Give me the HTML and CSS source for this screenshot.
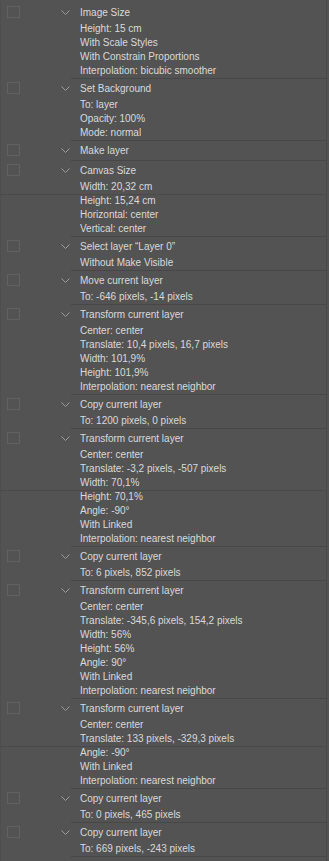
FILE: index.html
```html
<!DOCTYPE html>
<html>
<head>
<meta charset="utf-8">
<link rel="stylesheet" href="styles.css">
</head>
<body>
<div class="panel">
  <div class="item">
    <div class="ctrl"><span class="check"></span><svg class="chev" viewBox="0 0 9 5"><polyline points="0.5,0.5 4.5,4.5 8.5,0.5"/></svg></div>
    <div class="body">
      <div class="title">Image Size</div>
      <div class="line">Height: 15 cm</div>
      <div class="line">With Scale Styles</div>
      <div class="line">With Constrain Proportions</div>
      <div class="line">Interpolation: bicubic smoother</div>
    </div>
  </div>
  <div class="item">
    <div class="ctrl"><span class="check"></span><svg class="chev" viewBox="0 0 9 5"><polyline points="0.5,0.5 4.5,4.5 8.5,0.5"/></svg></div>
    <div class="body">
      <div class="title">Set Background</div>
      <div class="line">To: layer</div>
      <div class="line">Opacity: 100%</div>
      <div class="line">Mode: normal</div>
    </div>
  </div>
  <div class="item">
    <div class="ctrl"><span class="check"></span><svg class="chev" viewBox="0 0 9 5"><polyline points="0.5,0.5 4.5,4.5 8.5,0.5"/></svg></div>
    <div class="body">
      <div class="title">Make layer</div>
    </div>
  </div>
  <div class="item">
    <div class="ctrl"><span class="check"></span><svg class="chev" viewBox="0 0 9 5"><polyline points="0.5,0.5 4.5,4.5 8.5,0.5"/></svg></div>
    <div class="body">
      <div class="title">Canvas Size</div>
      <div class="line">Width: 20,32 cm</div>
      <div class="line cut">Height: 15,24 cm</div>
      <div class="line">Horizontal: center</div>
      <div class="line">Vertical: center</div>
    </div>
  </div>
  <div class="item">
    <div class="ctrl"><span class="check"></span><svg class="chev" viewBox="0 0 9 5"><polyline points="0.5,0.5 4.5,4.5 8.5,0.5"/></svg></div>
    <div class="body">
      <div class="title">Select layer “Layer 0”</div>
      <div class="line">Without Make Visible</div>
    </div>
  </div>
  <div class="item">
    <div class="ctrl"><span class="check"></span><svg class="chev" viewBox="0 0 9 5"><polyline points="0.5,0.5 4.5,4.5 8.5,0.5"/></svg></div>
    <div class="body">
      <div class="title">Move current layer</div>
      <div class="line">To: -646 pixels, -14 pixels</div>
    </div>
  </div>
  <div class="item">
    <div class="ctrl"><span class="check"></span><svg class="chev" viewBox="0 0 9 5"><polyline points="0.5,0.5 4.5,4.5 8.5,0.5"/></svg></div>
    <div class="body">
      <div class="title">Transform current layer</div>
      <div class="line">Center: center</div>
      <div class="line">Translate: 10,4 pixels, 16,7 pixels</div>
      <div class="line">Width: 101,9%</div>
      <div class="line">Height: 101,9%</div>
      <div class="line">Interpolation: nearest neighbor</div>
    </div>
  </div>
  <div class="item">
    <div class="ctrl"><span class="check"></span><svg class="chev" viewBox="0 0 9 5"><polyline points="0.5,0.5 4.5,4.5 8.5,0.5"/></svg></div>
    <div class="body">
      <div class="title">Copy current layer</div>
      <div class="line">To: 1200 pixels, 0 pixels</div>
    </div>
  </div>
  <div class="item">
    <div class="ctrl"><span class="check"></span><svg class="chev" viewBox="0 0 9 5"><polyline points="0.5,0.5 4.5,4.5 8.5,0.5"/></svg></div>
    <div class="body">
      <div class="title">Transform current layer</div>
      <div class="line">Center: center</div>
      <div class="line">Translate: -3,2 pixels, -507 pixels</div>
      <div class="line">Width: 70,1%</div>
      <div class="line cut">Height: 70,1%</div>
      <div class="line">Angle: -90°</div>
      <div class="line">With Linked</div>
      <div class="line">Interpolation: nearest neighbor</div>
    </div>
  </div>
  <div class="item">
    <div class="ctrl"><span class="check"></span><svg class="chev" viewBox="0 0 9 5"><polyline points="0.5,0.5 4.5,4.5 8.5,0.5"/></svg></div>
    <div class="body">
      <div class="title">Copy current layer</div>
      <div class="line">To: 6 pixels, 852 pixels</div>
    </div>
  </div>
  <div class="item">
    <div class="ctrl"><span class="check"></span><svg class="chev" viewBox="0 0 9 5"><polyline points="0.5,0.5 4.5,4.5 8.5,0.5"/></svg></div>
    <div class="body">
      <div class="title">Transform current layer</div>
      <div class="line">Center: center</div>
      <div class="line">Translate: -345,6 pixels, 154,2 pixels</div>
      <div class="line">Width: 56%</div>
      <div class="line">Height: 56%</div>
      <div class="line">Angle: 90°</div>
      <div class="line">With Linked</div>
      <div class="line">Interpolation: nearest neighbor</div>
    </div>
  </div>
  <div class="item">
    <div class="ctrl"><span class="check"></span><svg class="chev" viewBox="0 0 9 5"><polyline points="0.5,0.5 4.5,4.5 8.5,0.5"/></svg></div>
    <div class="body">
      <div class="title">Transform current layer</div>
      <div class="line">Center: center</div>
      <div class="line">Translate: 133 pixels, -329,3 pixels</div>
      <div class="line cut">Angle: -90°</div>
      <div class="line">With Linked</div>
      <div class="line">Interpolation: nearest neighbor</div>
    </div>
  </div>
  <div class="item">
    <div class="ctrl"><span class="check"></span><svg class="chev" viewBox="0 0 9 5"><polyline points="0.5,0.5 4.5,4.5 8.5,0.5"/></svg></div>
    <div class="body">
      <div class="title">Copy current layer</div>
      <div class="line">To: 0 pixels, 465 pixels</div>
    </div>
  </div>
  <div class="item">
    <div class="ctrl"><span class="check"></span><svg class="chev" viewBox="0 0 9 5"><polyline points="0.5,0.5 4.5,4.5 8.5,0.5"/></svg></div>
    <div class="body">
      <div class="title">Copy current layer</div>
      <div class="line">To: 669 pixels, -243 pixels</div>
    </div>
  </div>
</div>
</body>
</html>
```

FILE: styles.css
```css
html, body {
  margin: 0;
  padding: 0;
  background: #535353;
}

body {
  font-family: "Liberation Sans", Arial, sans-serif;
  font-size: 10px;
  color: #dadada;
}

.panel {
  width: 327px;
  min-height: 861px;
  box-sizing: border-box;
  padding-top: 3px;
  border-left: 1px solid #4e4e4e;
  border-right: 1px solid #4a4a4a;
}

.item {
  display: grid;
  grid-template-columns: 70px 1fr;
}

.ctrl {
  display: flex;
  align-items: center;
  height: 19px;
  padding-left: 6px;
  padding-right: 1px;
}

.check {
  width: 13px;
  height: 12px;
  box-sizing: border-box;
  border: 1px solid #616161;
  margin-top: -2px;
}

.chev {
  margin-left: auto;
  width: 9px;
  height: 5px;
  fill: none;
  stroke: #9c9c9c;
  stroke-width: 1;
}

.body {
  border-bottom: 1px solid #474747;
  padding-left: 9px;
}

.title {
  height: 19px;
  line-height: 19px;
  white-space: nowrap;
}

.line {
  position: relative;
  height: 14px;
  line-height: 14px;
  white-space: nowrap;
}

.line.cut::before {
  content: "";
  position: absolute;
  top: 0;
  left: -80px;
  right: 0;
  height: 1px;
  background: #4a4a4a;
}
```
